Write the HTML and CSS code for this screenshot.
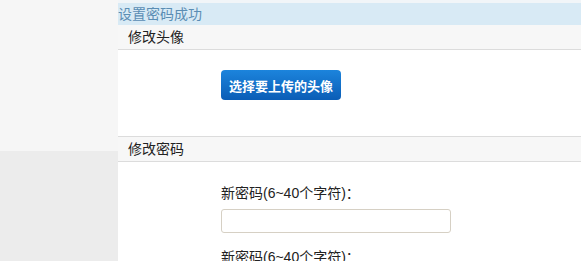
FILE: index.html
```html
<!DOCTYPE html>
<html lang="zh-CN">
<head>
    <meta charset="UTF-8">
    <title>修改资料</title>
    <link rel="stylesheet" href="styles.css">
</head>
<body>
    <div class="page">
        <aside class="sidebar">
            <div class="sidebar-top"></div>
            <div class="sidebar-bottom"></div>
        </aside>
        <main class="content">
            <div class="notice">设置密码成功</div>

            <div class="section-head">修改头像</div>
            <div class="avatar-box">
                <button class="upload-btn">选择要上传的头像</button>
            </div>

            <div class="section-head bordered">修改密码</div>
            <form class="pwd-form">
                <label class="field-label">新密码(6~40个字符)：</label>
                <input class="field-input" type="password">
                <label class="field-label">新密码(6~40个字符)：</label>
                <input class="field-input" type="password">
            </form>
        </main>
    </div>
</body>
</html>
```

FILE: styles.css
```css
* {
    margin: 0;
    padding: 0;
    box-sizing: border-box;
}

body {
    font-family: "Liberation Sans", "Noto Sans CJK SC", sans-serif;
    font-size: 14px;
    color: #222;
    background: #fff;
}

.page {
    display: flex;
    min-height: 261px;
}

.sidebar {
    width: 118px;
    display: flex;
    flex-direction: column;
}

.sidebar-top {
    height: 151px;
    background: #f6f6f6;
}

.sidebar-bottom {
    flex: 1;
    background: #ececec;
}

.content {
    flex: 1;
    background: #fff;
    border-top: 3px solid #f1f5f8;
}

.notice {
    height: 22px;
    line-height: 22px;
    background: #d8eaf5;
    color: #5a8db4;
    font-size: 14px;
}

.section-head {
    height: 25px;
    line-height: 24px;
    padding-left: 10px;
    font-size: 14px;
    background: #f7f7f7;
    border-bottom: 1px solid #dcdcdc;
}

.section-head.bordered {
    border-top: 1px solid #dcdcdc;
    height: 26px;
}

.avatar-box {
    height: 86px;
    padding: 20px 0 0 103px;
}

.upload-btn {
    width: 120px;
    height: 30px;
    border: none;
    border-radius: 4px;
    background: linear-gradient(#1c84dc, #0a5db6);
    color: #fff;
    font-family: inherit;
    font-size: 13px;
    font-weight: bold;
}

.pwd-form {
    display: flex;
    flex-direction: column;
    align-items: flex-start;
    padding: 22px 0 0 103px;
}

.field-label {
    font-size: 14px;
    line-height: 18px;
}

.field-input {
    width: 230px;
    height: 24px;
    margin: 7px 0 15px;
    border: 1px solid #d6d0c4;
    border-radius: 3px;
    background: #fff;
}
```
